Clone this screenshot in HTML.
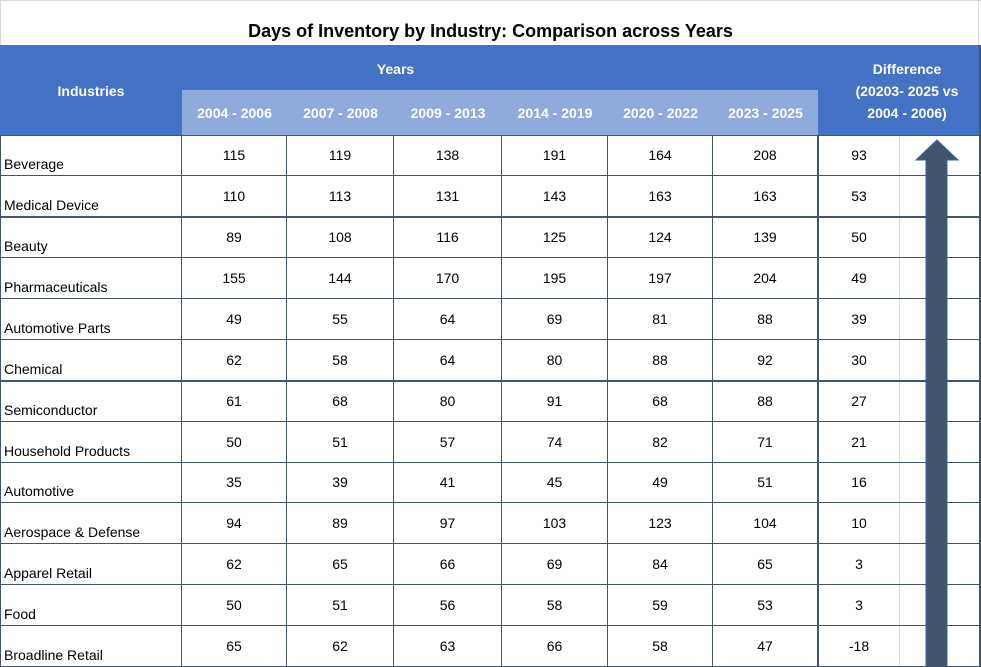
<!DOCTYPE html>
<html><head><style>
*{margin:0;padding:0;box-sizing:border-box}
body{width:981px;height:667px;background:#fff;font-family:"Liberation Sans",sans-serif;position:relative;overflow:hidden}
.t{position:absolute;left:0;top:21px;width:981px;text-align:center;font-weight:bold;font-size:18px;color:#000}
.hb{position:absolute;left:0;top:45px;width:981px;height:90px;background:#4472c4}
.hs{position:absolute;left:182px;top:90px;width:636px;height:45px;background:#8faadc}
.w{position:absolute;color:#fff;font-weight:bold;font-size:14px;text-align:center}
.r{position:absolute;left:0;width:981px;height:41px;border-bottom:1px solid #44546a}
.c{position:absolute;top:0;height:100%;border-right:1px solid #44546a;font-size:14px;text-align:center;padding-top:12px;color:#000}
.n{left:0;width:182px;text-align:left;padding:0 0 0 4px;padding-top:21px}
</style></head><body>
<div style="position:absolute;left:0;top:0;width:981px;height:1px;background:#d9d9d9"></div>
<div style="position:absolute;left:0;top:0;width:1px;height:45px;background:#d9d9d9"></div>
<div style="position:absolute;left:978px;top:0;width:1px;height:45px;background:#d9d9d9"></div>
<div class="t">Days of Inventory by Industry: Comparison across Years</div>
<div class="hb"></div><div class="hs"></div>
<div class="w" style="left:0;width:182px;top:83px">Industries</div>
<div class="w" style="left:182px;width:427px;top:61px">Years</div>
<div class="w" style="left:818px;width:178px;top:58px;line-height:22px">Difference<br>(20203- 2025 vs<br>2004 - 2006)</div>
<div class="w" style="left:182px;width:105px;top:105px">2004 - 2006</div>
<div class="w" style="left:287px;width:107px;top:105px">2007 - 2008</div>
<div class="w" style="left:394px;width:108px;top:105px">2009 - 2013</div>
<div class="w" style="left:502px;width:106px;top:105px">2014 - 2019</div>
<div class="w" style="left:608px;width:105px;top:105px">2020 - 2022</div>
<div class="w" style="left:713px;width:105px;top:105px">2023 - 2025</div>
<div style="position:absolute;left:0;top:135px;width:981px;height:1px;background:#44546a"></div>
<div style="position:absolute;left:899px;top:136px;width:1px;height:531px;background:#d9d9d9"></div>
<div style="position:absolute;left:817px;top:136px;width:2px;height:531px;background:#44546a"></div>
<div style="position:absolute;left:0;top:216px;width:981px;height:2px;background:#44546a"></div>
<div style="position:absolute;left:0;top:380px;width:981px;height:2px;background:#44546a"></div>
<svg style="position:absolute;left:0;top:0" width="981" height="667"><polygon points="937,140 958,160 947,160 947,667 926,667 926,160 916,160" fill="#44546a" stroke="#3a5fb0" stroke-width="1"/></svg>
<div class="r" style="top:135px"><div class="c n">Beverage</div><div class="c" style="left:182px;width:105px">115</div><div class="c" style="left:287px;width:107px">119</div><div class="c" style="left:394px;width:108px">138</div><div class="c" style="left:502px;width:106px">191</div><div class="c" style="left:608px;width:105px">164</div><div class="c" style="left:713px;width:105px">208</div><div class="c" style="left:818px;width:82px;border:0">93</div></div>
<div class="r" style="top:176px"><div class="c n">Medical Device</div><div class="c" style="left:182px;width:105px">110</div><div class="c" style="left:287px;width:107px">113</div><div class="c" style="left:394px;width:108px">131</div><div class="c" style="left:502px;width:106px">143</div><div class="c" style="left:608px;width:105px">163</div><div class="c" style="left:713px;width:105px">163</div><div class="c" style="left:818px;width:82px;border:0">53</div></div>
<div class="r" style="top:217px"><div class="c n">Beauty</div><div class="c" style="left:182px;width:105px">89</div><div class="c" style="left:287px;width:107px">108</div><div class="c" style="left:394px;width:108px">116</div><div class="c" style="left:502px;width:106px">125</div><div class="c" style="left:608px;width:105px">124</div><div class="c" style="left:713px;width:105px">139</div><div class="c" style="left:818px;width:82px;border:0">50</div></div>
<div class="r" style="top:258px"><div class="c n">Pharmaceuticals</div><div class="c" style="left:182px;width:105px">155</div><div class="c" style="left:287px;width:107px">144</div><div class="c" style="left:394px;width:108px">170</div><div class="c" style="left:502px;width:106px">195</div><div class="c" style="left:608px;width:105px">197</div><div class="c" style="left:713px;width:105px">204</div><div class="c" style="left:818px;width:82px;border:0">49</div></div>
<div class="r" style="top:299px"><div class="c n">Automotive Parts</div><div class="c" style="left:182px;width:105px">49</div><div class="c" style="left:287px;width:107px">55</div><div class="c" style="left:394px;width:108px">64</div><div class="c" style="left:502px;width:106px">69</div><div class="c" style="left:608px;width:105px">81</div><div class="c" style="left:713px;width:105px">88</div><div class="c" style="left:818px;width:82px;border:0">39</div></div>
<div class="r" style="top:340px"><div class="c n">Chemical</div><div class="c" style="left:182px;width:105px">62</div><div class="c" style="left:287px;width:107px">58</div><div class="c" style="left:394px;width:108px">64</div><div class="c" style="left:502px;width:106px">80</div><div class="c" style="left:608px;width:105px">88</div><div class="c" style="left:713px;width:105px">92</div><div class="c" style="left:818px;width:82px;border:0">30</div></div>
<div class="r" style="top:381px"><div class="c n">Semiconductor</div><div class="c" style="left:182px;width:105px">61</div><div class="c" style="left:287px;width:107px">68</div><div class="c" style="left:394px;width:108px">80</div><div class="c" style="left:502px;width:106px">91</div><div class="c" style="left:608px;width:105px">68</div><div class="c" style="left:713px;width:105px">88</div><div class="c" style="left:818px;width:82px;border:0">27</div></div>
<div class="r" style="top:422px"><div class="c n">Household Products</div><div class="c" style="left:182px;width:105px">50</div><div class="c" style="left:287px;width:107px">51</div><div class="c" style="left:394px;width:108px">57</div><div class="c" style="left:502px;width:106px">74</div><div class="c" style="left:608px;width:105px">82</div><div class="c" style="left:713px;width:105px">71</div><div class="c" style="left:818px;width:82px;border:0">21</div></div>
<div class="r" style="top:462px"><div class="c n">Automotive</div><div class="c" style="left:182px;width:105px">35</div><div class="c" style="left:287px;width:107px">39</div><div class="c" style="left:394px;width:108px">41</div><div class="c" style="left:502px;width:106px">45</div><div class="c" style="left:608px;width:105px">49</div><div class="c" style="left:713px;width:105px">51</div><div class="c" style="left:818px;width:82px;border:0">16</div></div>
<div class="r" style="top:503px"><div class="c n">Aerospace &amp; Defense</div><div class="c" style="left:182px;width:105px">94</div><div class="c" style="left:287px;width:107px">89</div><div class="c" style="left:394px;width:108px">97</div><div class="c" style="left:502px;width:106px">103</div><div class="c" style="left:608px;width:105px">123</div><div class="c" style="left:713px;width:105px">104</div><div class="c" style="left:818px;width:82px;border:0">10</div></div>
<div class="r" style="top:544px"><div class="c n">Apparel Retail</div><div class="c" style="left:182px;width:105px">62</div><div class="c" style="left:287px;width:107px">65</div><div class="c" style="left:394px;width:108px">66</div><div class="c" style="left:502px;width:106px">69</div><div class="c" style="left:608px;width:105px">84</div><div class="c" style="left:713px;width:105px">65</div><div class="c" style="left:818px;width:82px;border:0">3</div></div>
<div class="r" style="top:585px"><div class="c n">Food</div><div class="c" style="left:182px;width:105px">50</div><div class="c" style="left:287px;width:107px">51</div><div class="c" style="left:394px;width:108px">56</div><div class="c" style="left:502px;width:106px">58</div><div class="c" style="left:608px;width:105px">59</div><div class="c" style="left:713px;width:105px">53</div><div class="c" style="left:818px;width:82px;border:0">3</div></div>
<div class="r" style="top:626px"><div class="c n">Broadline Retail</div><div class="c" style="left:182px;width:105px">65</div><div class="c" style="left:287px;width:107px">62</div><div class="c" style="left:394px;width:108px">63</div><div class="c" style="left:502px;width:106px">66</div><div class="c" style="left:608px;width:105px">58</div><div class="c" style="left:713px;width:105px">47</div><div class="c" style="left:818px;width:82px;border:0">-18</div></div>
<div style="position:absolute;left:979px;top:45px;width:2px;height:622px;background:#44546a"></div>
<div style="position:absolute;left:0;top:135px;width:1px;height:532px;background:#44546a"></div>
</body></html>
